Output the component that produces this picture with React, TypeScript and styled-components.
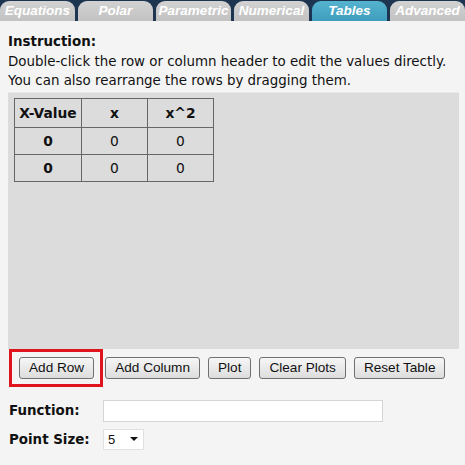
import React from "react";
import styled, { createGlobalStyle } from "styled-components";

const Global = createGlobalStyle`
  html, body { margin: 0; padding: 0; background: #f4f4f4; }
  body { font-family: "DejaVu Sans", Verdana, sans-serif; color: #111; }
`;

const Page = styled.div`
  width: 465px;
  height: 465px;
  background: #f4f4f4;
  overflow: hidden;
`;

const TabBar = styled.div`
  display: flex;
  gap: 3px;
  background: #1d3550;
  padding-top: 1px;
  height: 20px;
`;

const Tab = styled.div<{ $active?: boolean }>`
  width: 75px;
  flex: none;
  height: 20px;
  border-radius: 9px 9px 0 0;
  background: ${(p) => (p.$active ? "linear-gradient(#55b3cf, #3f9ebd)" : "linear-gradient(#d2d2d2, #c2c2c2)")};
  color: #fff;
  font-family: "Liberation Sans", Arial, sans-serif;
  font-weight: bold;
  font-style: italic;
  font-size: 13.5px;
  line-height: 20px;
  text-align: center;
  white-space: nowrap;
  overflow: hidden;
`;

const Content = styled.div`
  padding: 11px 6px 0 8px;
`;

const Instruction = styled.div`
  font-size: 13.4px;
  line-height: 19.5px;
`;

const Strong = styled.div`
  font-weight: bold;
`;

const TableArea = styled.div`
  margin-top: 1px;
  height: 257px;
  background: #dcdcdc;
  border-top: 1px solid #e8e8e8;
  padding: 5px 6px;
  box-sizing: border-box;
`;

const Grid = styled.table`
  border-collapse: collapse;
  border: 1px solid #555;
  font-size: 13.8px;
`;

const Cell = styled.td<{ $bold?: boolean; $h: number; $w: number }>`
  border: 1px solid #666;
  text-align: center;
  font-weight: ${(p) => (p.$bold ? "bold" : "normal")};
  height: ${(p) => p.$h}px;
  width: ${(p) => p.$w}px;
  padding: 0;
  box-sizing: border-box;
  color: #111;
`;

const ButtonRow = styled.div`
  display: flex;
  align-items: center;
  gap: 8px;
  height: 36px;
  margin-top: 1px;
`;

const Highlight = styled.div`
  border: 3px solid #e0141e;
  padding: 5px 6px 5px 7px;
  margin-left: 1px;
  margin-right: -6px;
  display: flex;
  flex: none;
`;

const Button = styled.button`
  flex: none;
  white-space: nowrap;
  font-family: "Liberation Sans", Arial, sans-serif;
  font-size: 13.6px;
  color: #111;
  height: 22px;
  padding: 0 9px;
  border: 1px solid #707070;
  border-radius: 3px;
  background: linear-gradient(#f6f6f6, #dddddd);
  cursor: pointer;
`;

const FormRow = styled.div<{ $mt: number }>`
  display: flex;
  align-items: center;
  margin-top: ${(p) => p.$mt}px;
  margin-left: 1px;
`;

const Label = styled.label`
  width: 94px;
  font-weight: bold;
  font-size: 13.4px;
`;

const TextInput = styled.input`
  width: 280px;
  height: 22px;
  box-sizing: border-box;
  border: 1px solid #d4d4d4;
  background: #fff;
`;

const SelectBox = styled.div`
  width: 41px;
  height: 21px;
  box-sizing: border-box;
  border: 1px solid #e0e0e0;
  background: #fff;
  display: flex;
  align-items: center;
  justify-content: space-between;
  padding: 0 5px 0 4px;
  font-family: "Liberation Sans", Arial, sans-serif;
  font-size: 13px;
`;

const Arrow = styled.span`
  width: 0;
  height: 0;
  border-left: 4px solid transparent;
  border-right: 4px solid transparent;
  border-top: 4px solid #111;
`;

const tabs = ["Equations", "Polar", "Parametric", "Numerical", "Tables", "Advanced"];

export default function App() {
  return (
    <Page>
      <Global />
      <TabBar>
        {tabs.map((t) => (
          <Tab key={t} $active={t === "Tables"}>
            {t}
          </Tab>
        ))}
      </TabBar>
      <Content>
        <Instruction>
          <Strong>Instruction:</Strong>
          <div>Double-click the row or column header to edit the values directly.</div>
          <div>You can also rearrange the rows by dragging them.</div>
        </Instruction>
        <TableArea>
          <Grid>
            <tbody>
              <tr>
                <Cell $bold $h={29} $w={67}>X-Value</Cell>
                <Cell $bold $h={29} $w={66}>x</Cell>
                <Cell $bold $h={29} $w={66}>x^2</Cell>
              </tr>
              {[0, 1].map((i) => (
                <tr key={i}>
                  <Cell $bold $h={27} $w={67}>0</Cell>
                  <Cell $h={27} $w={66}>0</Cell>
                  <Cell $h={27} $w={66}>0</Cell>
                </tr>
              ))}
            </tbody>
          </Grid>
        </TableArea>
        <ButtonRow>
          <Highlight>
            <Button>Add Row</Button>
          </Highlight>
          <Button>Add Column</Button>
          <Button>Plot</Button>
          <Button>Clear Plots</Button>
          <Button>Reset Table</Button>
        </ButtonRow>
        <FormRow $mt={14}>
          <Label>Function:</Label>
          <TextInput />
        </FormRow>
        <FormRow $mt={7}>
          <Label>Point Size:</Label>
          <SelectBox>
            5<Arrow />
          </SelectBox>
        </FormRow>
      </Content>
    </Page>
  );
}
